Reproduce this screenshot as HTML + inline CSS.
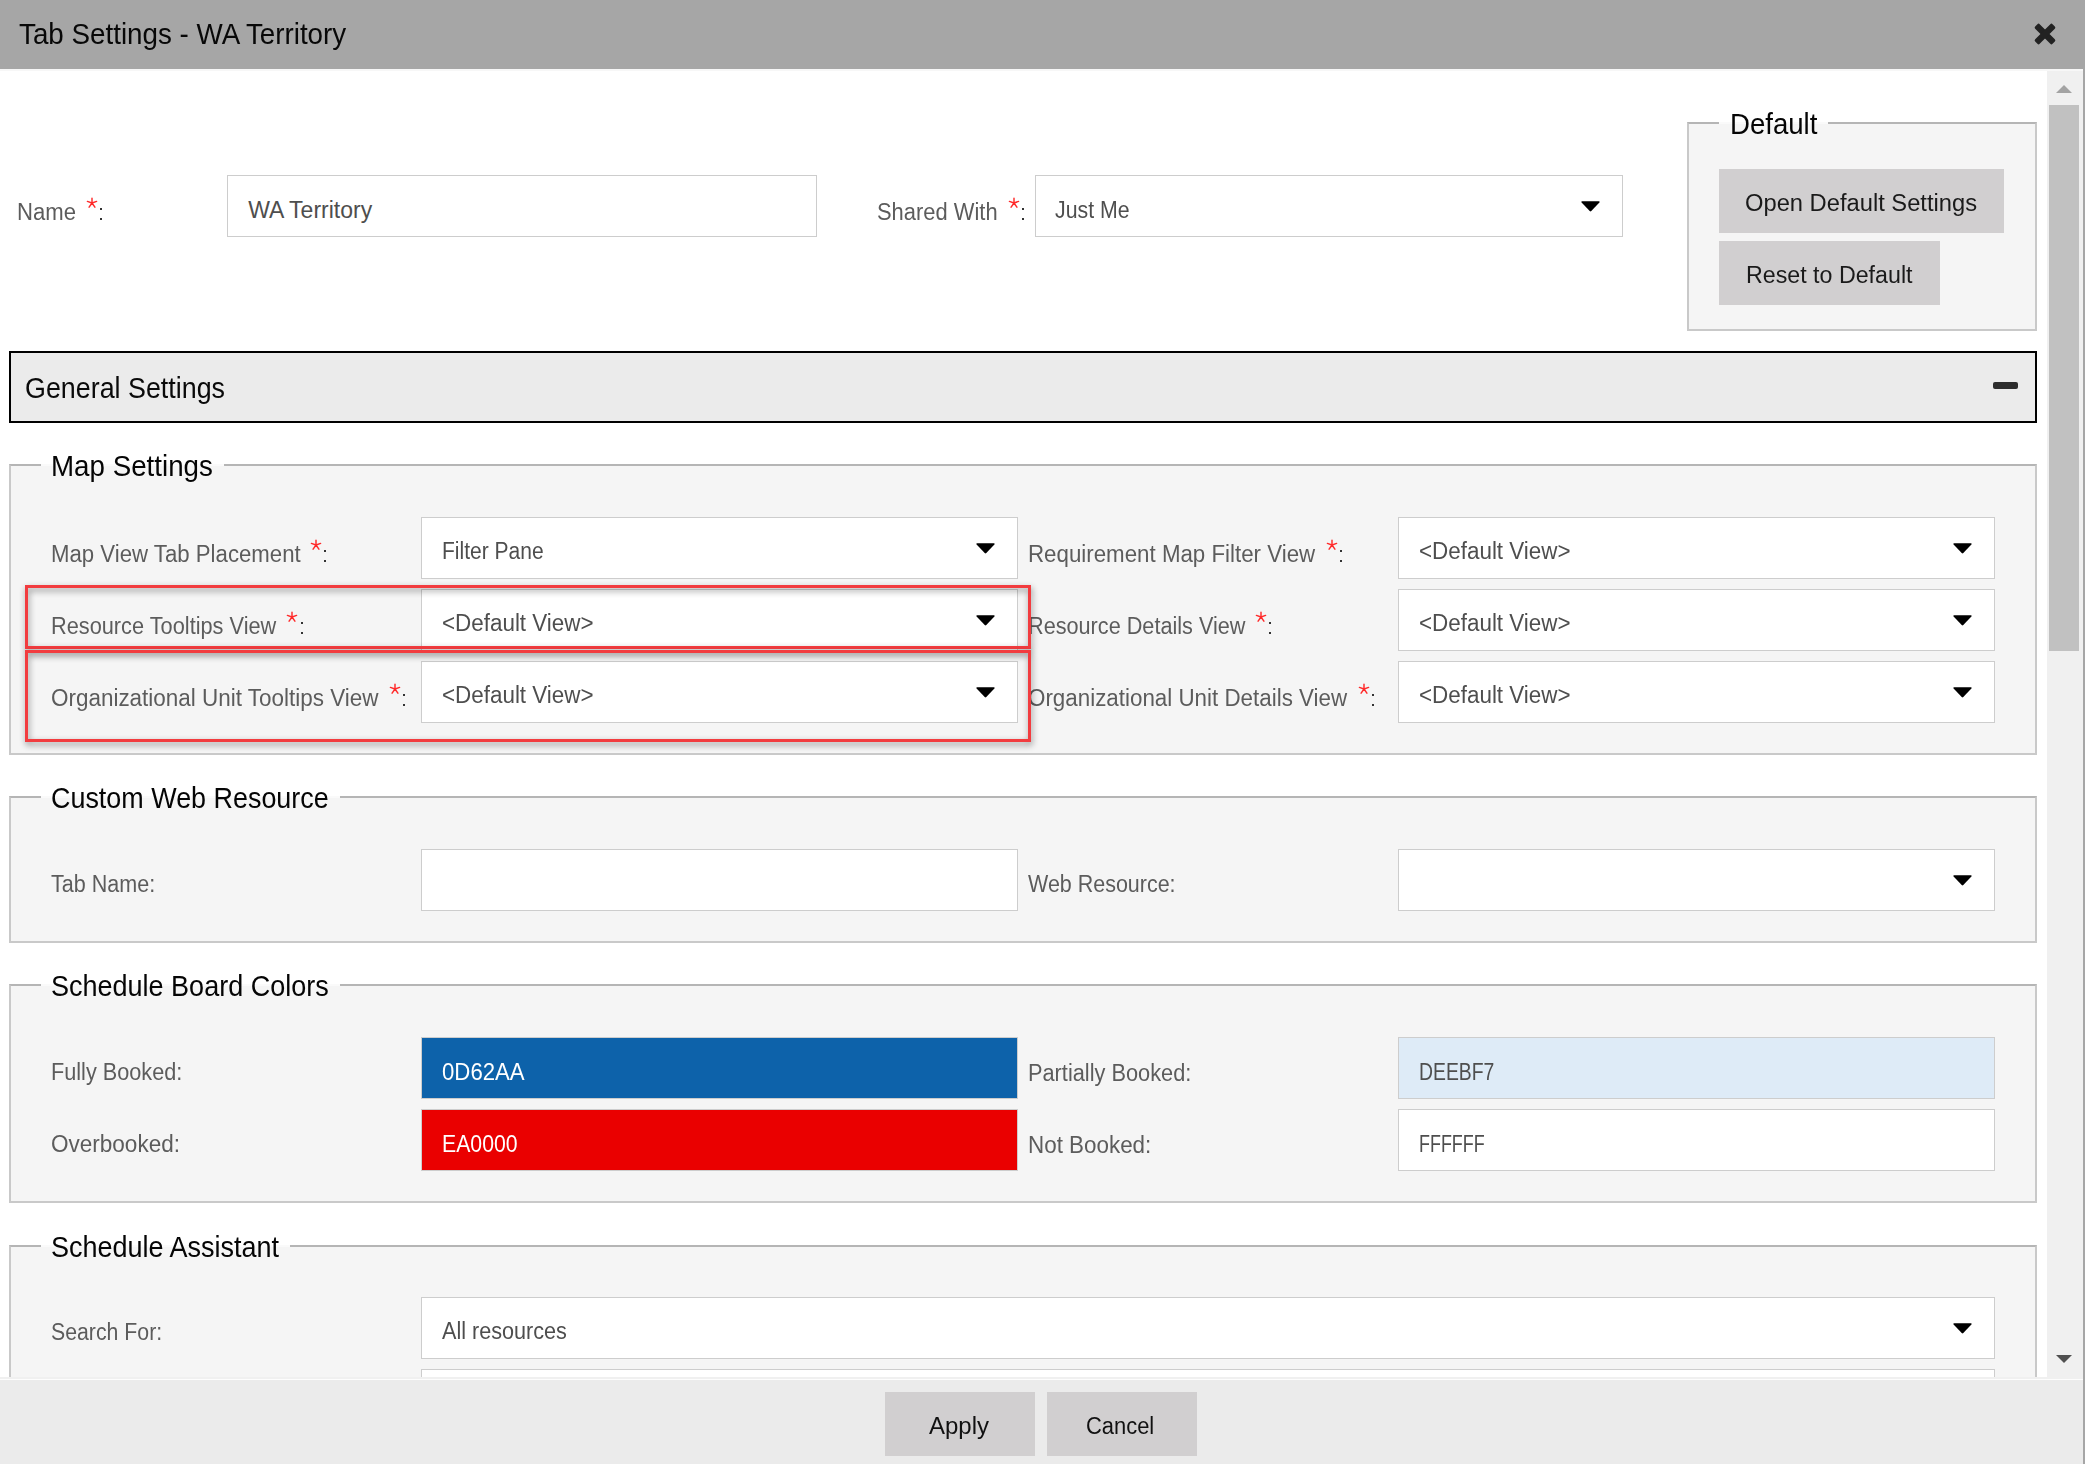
<!DOCTYPE html>
<html><head><meta charset="utf-8"><title>Tab Settings - WA Territory</title>
<style>
html,body{margin:0;padding:0;width:2085px;height:1464px;overflow:hidden;background:#fff;}
body{position:relative;font-family:"Liberation Sans",sans-serif;}
.t{position:absolute;white-space:nowrap;}
.r{position:absolute;}
#content{position:absolute;left:0;top:71px;width:2047px;height:1306px;overflow:hidden;}
#inner{position:absolute;left:0;top:-71px;width:2047px;height:1600px;}
</style></head><body>
<div class="r" style="left:0px;top:0px;width:2085px;height:69px;background:#a6a6a6;"></div>
<div class="t" style="left:19.20px;top:20px;font-size:29px;line-height:29px;color:#080808;transform:scaleX(0.9576);transform-origin:0 0;">Tab Settings - WA Territory</div>
<svg class="r" style="left:2031px;top:19.5px" width="28" height="28" viewBox="-14 -14 28 28"><g fill="#222" transform="rotate(45)"><rect x="-12.3" y="-3.2" width="24.6" height="6.4" rx="1.6"/><rect x="-3.2" y="-12.3" width="6.4" height="24.6" rx="1.6"/></g></svg>
<div class="r" style="left:0px;top:69px;width:2083px;height:2px;background:#f7f7f7;"></div>
<div class="r" style="left:2083px;top:0px;width:2px;height:1464px;background:#a6a6a6;"></div>
<div class="r" style="left:0px;top:71px;width:2047px;height:1306px;background:#ffffff;"></div>
<div class="r" style="left:2047px;top:71px;width:36px;height:1306px;background:#f0f0f0;"></div>
<div class="r" style="left:2049px;top:105px;width:30px;height:546px;background:#c1c1c1;"></div>
<svg class="r" style="left:2055px;top:84px" width="18" height="10" viewBox="0 0 18 10"><path d="M1 9 L9 1 L17 9Z" fill="#a3a3a3"/></svg>
<svg class="r" style="left:2055px;top:1354px" width="18" height="10" viewBox="0 0 18 10"><path d="M1 1 L17 1 L9 9Z" fill="#505050"/></svg>
<div class="r" style="left:0px;top:1377px;width:2083px;height:2px;background:#f0f0f0;"></div>
<div class="r" style="left:0px;top:1379px;width:2083px;height:1px;background:#fdfdfd;"></div>
<div class="r" style="left:0px;top:1380px;width:2083px;height:84px;background:#ebebeb;"></div>
<div class="r" style="left:885px;top:1392px;width:150px;height:64px;background:#d1cfd0;"></div>
<div class="r" style="left:1047px;top:1392px;width:150px;height:64px;background:#d1cfd0;"></div>
<div class="t" style="left:928.70px;top:1415px;font-size:23px;line-height:23px;color:#111;transform:scaleX(1.0431);transform-origin:0 0;">Apply</div>
<div class="t" style="left:1086.20px;top:1415px;font-size:23px;line-height:23px;color:#111;transform:scaleX(0.9528);transform-origin:0 0;">Cancel</div>

<div id="content"><div id="inner">
<div class="t" style="left:16.70px;top:201px;font-size:23px;line-height:23px;color:#5c5c5c;transform:scaleX(0.9623);transform-origin:0 0;">Name</div>
<svg class="r" style="left:85px;top:196.2px" width="14" height="14" viewBox="-7 -7 14 14"><path d="M0 0 L0 -4.8 M0 0 L-4.6 -1.6 M0 0 L4.6 -1.6 M0 0 L-2.9 4.2 M0 0 L2.9 4.2" stroke="#ff2a2a" stroke-width="1.45" stroke-linecap="round" fill="none"/></svg>
<div class="r" style="left:100px;top:208px;width:2px;height:2px;background:#333;"></div>
<div class="r" style="left:100px;top:218px;width:2px;height:2px;background:#333;"></div>
<div class="r" style="left:227px;top:175px;width:590px;height:62px;background:#fff;border:1px solid #cdcdcd;box-sizing:border-box;"></div>
<div class="t" style="left:248.20px;top:198.5px;font-size:23px;line-height:23px;color:#4e4e4e;">WA Territory</div>
<div class="t" style="left:876.70px;top:201px;font-size:23px;line-height:23px;color:#5c5c5c;transform:scaleX(0.9528);transform-origin:0 0;">Shared With</div>
<svg class="r" style="left:1006.75px;top:196.2px" width="14" height="14" viewBox="-7 -7 14 14"><path d="M0 0 L0 -4.8 M0 0 L-4.6 -1.6 M0 0 L4.6 -1.6 M0 0 L-2.9 4.2 M0 0 L2.9 4.2" stroke="#ff2a2a" stroke-width="1.45" stroke-linecap="round" fill="none"/></svg>
<div class="r" style="left:1022px;top:208px;width:2px;height:2px;background:#333;"></div>
<div class="r" style="left:1022px;top:218px;width:2px;height:2px;background:#333;"></div>
<div class="r" style="left:1035px;top:175px;width:588px;height:62px;background:#fff;border:1px solid #cdcdcd;box-sizing:border-box;"></div>
<div class="t" style="left:1055.20px;top:198.5px;font-size:23px;line-height:23px;color:#4e4e4e;transform:scaleX(0.9259);transform-origin:0 0;">Just Me</div>
<svg class="r" style="left:1579.5px;top:199.75px" width="21" height="12.5" viewBox="-1 -1 21 12.5"><path d="M1.2 0.3 L17.8 0.3 Q19.2 0.3 18.4 1.4 L10.3 10.0 Q9.5 10.8 8.7 10.0 L0.6 1.4 Q-0.2 0.3 1.2 0.3Z" fill="#000"/></svg>
<div class="r" style="left:1687px;top:122px;width:350px;height:209px;background:#f5f5f5;border:2px solid #c9c9c9;box-sizing:border-box;border-top-color:#b5b5b5;"></div>
<div class="r" style="left:1719px;top:122px;width:109px;height:2px;background:#fafafa;"></div>
<div class="t" style="left:1730.20px;top:110px;font-size:29px;line-height:29px;color:#050505;transform:scaleX(0.9511);transform-origin:0 0;">Default</div>
<div class="r" style="left:1719px;top:169px;width:285px;height:64px;background:#d1cfd0;"></div>
<div class="t" style="left:1744.80px;top:192px;font-size:23px;line-height:23px;color:#1a1a1a;transform:scaleX(1.0311);transform-origin:0 0;">Open Default Settings</div>
<div class="r" style="left:1719px;top:241px;width:221px;height:64px;background:#d1cfd0;"></div>
<div class="t" style="left:1745.70px;top:264px;font-size:23px;line-height:23px;color:#1a1a1a;transform:scaleX(1.0096);transform-origin:0 0;">Reset to Default</div>
<div class="r" style="left:9px;top:351px;width:2028px;height:72px;background:#ebebeb;border:2px solid #000;box-sizing:border-box;"></div>
<div class="t" style="left:25.20px;top:374px;font-size:29px;line-height:29px;color:#0a0a0a;transform:scaleX(0.9259);transform-origin:0 0;">General Settings</div>
<div class="r" style="left:1993px;top:382px;width:25px;height:7px;background:#2d2d2d;border-radius:2px;"></div>
<div class="r" style="left:9px;top:464px;width:2028px;height:291px;background:#f5f5f5;border:2px solid #c9c9c9;box-sizing:border-box;border-top-color:#b5b5b5;"></div>
<div class="r" style="left:41px;top:464px;width:183px;height:2px;background:#fafafa;"></div>
<div class="t" style="left:51.20px;top:452px;font-size:29px;line-height:29px;color:#050505;transform:scaleX(0.9562);transform-origin:0 0;">Map Settings</div>
<div class="t" style="left:51.20px;top:543px;font-size:23px;line-height:23px;color:#5c5c5c;transform:scaleX(0.9653);transform-origin:0 0;">Map View Tab Placement</div>
<svg class="r" style="left:309.25px;top:538.2px" width="14" height="14" viewBox="-7 -7 14 14"><path d="M0 0 L0 -4.8 M0 0 L-4.6 -1.6 M0 0 L4.6 -1.6 M0 0 L-2.9 4.2 M0 0 L2.9 4.2" stroke="#ff2a2a" stroke-width="1.45" stroke-linecap="round" fill="none"/></svg>
<div class="r" style="left:324px;top:550px;width:2px;height:2px;background:#333;"></div>
<div class="r" style="left:324px;top:560px;width:2px;height:2px;background:#333;"></div>
<div class="t" style="left:51.20px;top:615px;font-size:23px;line-height:23px;color:#5c5c5c;transform:scaleX(0.9456);transform-origin:0 0;">Resource Tooltips View</div>
<svg class="r" style="left:285px;top:610.2px" width="14" height="14" viewBox="-7 -7 14 14"><path d="M0 0 L0 -4.8 M0 0 L-4.6 -1.6 M0 0 L4.6 -1.6 M0 0 L-2.9 4.2 M0 0 L2.9 4.2" stroke="#ff2a2a" stroke-width="1.45" stroke-linecap="round" fill="none"/></svg>
<div class="r" style="left:300.5px;top:622px;width:2.0px;height:2px;background:#333;"></div>
<div class="r" style="left:300.5px;top:632px;width:2.0px;height:2px;background:#333;"></div>
<div class="t" style="left:51.20px;top:687px;font-size:23px;line-height:23px;color:#5c5c5c;transform:scaleX(0.9762);transform-origin:0 0;">Organizational Unit Tooltips View</div>
<svg class="r" style="left:388px;top:682.2px" width="14" height="14" viewBox="-7 -7 14 14"><path d="M0 0 L0 -4.8 M0 0 L-4.6 -1.6 M0 0 L4.6 -1.6 M0 0 L-2.9 4.2 M0 0 L2.9 4.2" stroke="#ff2a2a" stroke-width="1.45" stroke-linecap="round" fill="none"/></svg>
<div class="r" style="left:403px;top:694px;width:2px;height:2px;background:#333;"></div>
<div class="r" style="left:403px;top:704px;width:2px;height:2px;background:#333;"></div>
<div class="r" style="left:421px;top:517px;width:597px;height:62px;background:#fff;border:1px solid #cdcdcd;box-sizing:border-box;"></div>
<div class="t" style="left:442.20px;top:540px;font-size:23px;line-height:23px;color:#4e4e4e;transform:scaleX(0.9144);transform-origin:0 0;">Filter Pane</div>
<svg class="r" style="left:974.5px;top:541.75px" width="21" height="12.5" viewBox="-1 -1 21 12.5"><path d="M1.2 0.3 L17.8 0.3 Q19.2 0.3 18.4 1.4 L10.3 10.0 Q9.5 10.8 8.7 10.0 L0.6 1.4 Q-0.2 0.3 1.2 0.3Z" fill="#000"/></svg>
<div class="r" style="left:421px;top:589px;width:597px;height:62px;background:#fff;border:1px solid #cdcdcd;box-sizing:border-box;"></div>
<div class="t" style="left:442.20px;top:612px;font-size:23px;line-height:23px;color:#4e4e4e;transform:scaleX(0.9744);transform-origin:0 0;">&lt;Default View&gt;</div>
<svg class="r" style="left:974.5px;top:613.75px" width="21" height="12.5" viewBox="-1 -1 21 12.5"><path d="M1.2 0.3 L17.8 0.3 Q19.2 0.3 18.4 1.4 L10.3 10.0 Q9.5 10.8 8.7 10.0 L0.6 1.4 Q-0.2 0.3 1.2 0.3Z" fill="#000"/></svg>
<div class="r" style="left:421px;top:661px;width:597px;height:62px;background:#fff;border:1px solid #cdcdcd;box-sizing:border-box;"></div>
<div class="t" style="left:442.20px;top:684px;font-size:23px;line-height:23px;color:#4e4e4e;transform:scaleX(0.9744);transform-origin:0 0;">&lt;Default View&gt;</div>
<svg class="r" style="left:974.5px;top:685.75px" width="21" height="12.5" viewBox="-1 -1 21 12.5"><path d="M1.2 0.3 L17.8 0.3 Q19.2 0.3 18.4 1.4 L10.3 10.0 Q9.5 10.8 8.7 10.0 L0.6 1.4 Q-0.2 0.3 1.2 0.3Z" fill="#000"/></svg>
<div class="t" style="left:1027.95px;top:543px;font-size:23px;line-height:23px;color:#5c5c5c;transform:scaleX(0.9697);transform-origin:0 0;">Requirement Map Filter View</div>
<svg class="r" style="left:1324.5px;top:538.2px" width="14" height="14" viewBox="-7 -7 14 14"><path d="M0 0 L0 -4.8 M0 0 L-4.6 -1.6 M0 0 L4.6 -1.6 M0 0 L-2.9 4.2 M0 0 L2.9 4.2" stroke="#ff2a2a" stroke-width="1.45" stroke-linecap="round" fill="none"/></svg>
<div class="r" style="left:1339.5px;top:550px;width:2.0px;height:2px;background:#333;"></div>
<div class="r" style="left:1339.5px;top:560px;width:2.0px;height:2px;background:#333;"></div>
<div class="t" style="left:1027.95px;top:615px;font-size:23px;line-height:23px;color:#5c5c5c;transform:scaleX(0.9416);transform-origin:0 0;">Resource Details View</div>
<svg class="r" style="left:1254.25px;top:610.2px" width="14" height="14" viewBox="-7 -7 14 14"><path d="M0 0 L0 -4.8 M0 0 L-4.6 -1.6 M0 0 L4.6 -1.6 M0 0 L-2.9 4.2 M0 0 L2.9 4.2" stroke="#ff2a2a" stroke-width="1.45" stroke-linecap="round" fill="none"/></svg>
<div class="r" style="left:1269px;top:622px;width:2px;height:2px;background:#333;"></div>
<div class="r" style="left:1269px;top:632px;width:2px;height:2px;background:#333;"></div>
<div class="t" style="left:1027.95px;top:687px;font-size:23px;line-height:23px;color:#5c5c5c;transform:scaleX(0.9726);transform-origin:0 0;">Organizational Unit Details View</div>
<svg class="r" style="left:1356.75px;top:682.2px" width="14" height="14" viewBox="-7 -7 14 14"><path d="M0 0 L0 -4.8 M0 0 L-4.6 -1.6 M0 0 L4.6 -1.6 M0 0 L-2.9 4.2 M0 0 L2.9 4.2" stroke="#ff2a2a" stroke-width="1.45" stroke-linecap="round" fill="none"/></svg>
<div class="r" style="left:1371.5px;top:694px;width:2.0px;height:2px;background:#333;"></div>
<div class="r" style="left:1371.5px;top:704px;width:2.0px;height:2px;background:#333;"></div>
<div class="r" style="left:1398px;top:517px;width:597px;height:62px;background:#fff;border:1px solid #cdcdcd;box-sizing:border-box;"></div>
<div class="t" style="left:1419.20px;top:540px;font-size:23px;line-height:23px;color:#4e4e4e;transform:scaleX(0.9744);transform-origin:0 0;">&lt;Default View&gt;</div>
<svg class="r" style="left:1951.5px;top:541.75px" width="21" height="12.5" viewBox="-1 -1 21 12.5"><path d="M1.2 0.3 L17.8 0.3 Q19.2 0.3 18.4 1.4 L10.3 10.0 Q9.5 10.8 8.7 10.0 L0.6 1.4 Q-0.2 0.3 1.2 0.3Z" fill="#000"/></svg>
<div class="r" style="left:1398px;top:589px;width:597px;height:62px;background:#fff;border:1px solid #cdcdcd;box-sizing:border-box;"></div>
<div class="t" style="left:1419.20px;top:612px;font-size:23px;line-height:23px;color:#4e4e4e;transform:scaleX(0.9744);transform-origin:0 0;">&lt;Default View&gt;</div>
<svg class="r" style="left:1951.5px;top:613.75px" width="21" height="12.5" viewBox="-1 -1 21 12.5"><path d="M1.2 0.3 L17.8 0.3 Q19.2 0.3 18.4 1.4 L10.3 10.0 Q9.5 10.8 8.7 10.0 L0.6 1.4 Q-0.2 0.3 1.2 0.3Z" fill="#000"/></svg>
<div class="r" style="left:1398px;top:661px;width:597px;height:62px;background:#fff;border:1px solid #cdcdcd;box-sizing:border-box;"></div>
<div class="t" style="left:1419.20px;top:684px;font-size:23px;line-height:23px;color:#4e4e4e;transform:scaleX(0.9744);transform-origin:0 0;">&lt;Default View&gt;</div>
<svg class="r" style="left:1951.5px;top:685.75px" width="21" height="12.5" viewBox="-1 -1 21 12.5"><path d="M1.2 0.3 L17.8 0.3 Q19.2 0.3 18.4 1.4 L10.3 10.0 Q9.5 10.8 8.7 10.0 L0.6 1.4 Q-0.2 0.3 1.2 0.3Z" fill="#000"/></svg>
<div class="r" style="left:25px;top:585px;width:1006px;height:64px;border:3px solid #f23c3f;box-sizing:border-box;filter:drop-shadow(1px 3px 3px rgba(0,0,0,0.45));"></div>
<div class="r" style="left:25px;top:650px;width:1006px;height:92px;border:3px solid #f23c3f;box-sizing:border-box;filter:drop-shadow(1px 3px 3px rgba(0,0,0,0.45));"></div>
<div class="r" style="left:9px;top:796px;width:2028px;height:147px;background:#f5f5f5;border:2px solid #c9c9c9;box-sizing:border-box;border-top-color:#b5b5b5;"></div>
<div class="r" style="left:41px;top:796px;width:299px;height:2px;background:#fafafa;"></div>
<div class="t" style="left:51.20px;top:784px;font-size:29px;line-height:29px;color:#050505;transform:scaleX(0.9281);transform-origin:0 0;">Custom Web Resource</div>
<div class="t" style="left:51.20px;top:873px;font-size:23px;line-height:23px;color:#5c5c5c;transform:scaleX(0.9369);transform-origin:0 0;">Tab Name:</div>
<div class="r" style="left:421px;top:849px;width:597px;height:62px;background:#fff;border:1px solid #cdcdcd;box-sizing:border-box;"></div>
<div class="t" style="left:1027.95px;top:873px;font-size:23px;line-height:23px;color:#5c5c5c;transform:scaleX(0.9335);transform-origin:0 0;">Web Resource:</div>
<div class="r" style="left:1398px;top:849px;width:597px;height:62px;background:#fff;border:1px solid #cdcdcd;box-sizing:border-box;"></div>
<svg class="r" style="left:1951.5px;top:873.75px" width="21" height="12.5" viewBox="-1 -1 21 12.5"><path d="M1.2 0.3 L17.8 0.3 Q19.2 0.3 18.4 1.4 L10.3 10.0 Q9.5 10.8 8.7 10.0 L0.6 1.4 Q-0.2 0.3 1.2 0.3Z" fill="#000"/></svg>
<div class="r" style="left:9px;top:984px;width:2028px;height:219px;background:#f5f5f5;border:2px solid #c9c9c9;box-sizing:border-box;border-top-color:#b5b5b5;"></div>
<div class="r" style="left:41px;top:984px;width:299px;height:2px;background:#fafafa;"></div>
<div class="t" style="left:51.20px;top:972px;font-size:29px;line-height:29px;color:#050505;transform:scaleX(0.9312);transform-origin:0 0;">Schedule Board Colors</div>
<div class="t" style="left:51.20px;top:1061px;font-size:23px;line-height:23px;color:#5c5c5c;transform:scaleX(0.9424);transform-origin:0 0;">Fully Booked:</div>
<div class="t" style="left:51.20px;top:1133px;font-size:23px;line-height:23px;color:#5c5c5c;transform:scaleX(0.9792);transform-origin:0 0;">Overbooked:</div>
<div class="r" style="left:421px;top:1037px;width:597px;height:62px;background:#0d62aa;border:1px solid #cdcdcd;box-sizing:border-box;"></div>
<div class="r" style="left:421px;top:1109px;width:597px;height:62px;background:#ea0000;border:1px solid #cdcdcd;box-sizing:border-box;"></div>
<div class="t" style="left:441.70px;top:1060.5px;font-size:23px;line-height:23px;color:#ffffff;transform:scaleX(0.9651);transform-origin:0 0;">0D62AA</div>
<div class="t" style="left:441.70px;top:1132.5px;font-size:23px;line-height:23px;color:#ffffff;transform:scaleX(0.9232);transform-origin:0 0;">EA0000</div>
<div class="t" style="left:1027.95px;top:1061.5px;font-size:23px;line-height:23px;color:#5c5c5c;transform:scaleX(0.9462);transform-origin:0 0;">Partially Booked:</div>
<div class="t" style="left:1027.95px;top:1133.5px;font-size:23px;line-height:23px;color:#5c5c5c;transform:scaleX(0.9740);transform-origin:0 0;">Not Booked:</div>
<div class="r" style="left:1398px;top:1037px;width:597px;height:62px;background:#deebf7;border:1px solid #cdcdcd;box-sizing:border-box;"></div>
<div class="r" style="left:1398px;top:1109px;width:597px;height:62px;background:#ffffff;border:1px solid #cdcdcd;box-sizing:border-box;"></div>
<div class="t" style="left:1419.20px;top:1060.5px;font-size:23px;line-height:23px;color:#4e4e4e;transform:scaleX(0.8427);transform-origin:0 0;">DEEBF7</div>
<div class="t" style="left:1419.20px;top:1132.5px;font-size:23px;line-height:23px;color:#4e4e4e;transform:scaleX(0.7798);transform-origin:0 0;">FFFFFF</div>
<div class="r" style="left:9px;top:1245px;width:2028px;height:255px;background:#f5f5f5;border:2px solid #c9c9c9;box-sizing:border-box;border-top-color:#b5b5b5;border-bottom:none;"></div>
<div class="r" style="left:41px;top:1245px;width:249px;height:2px;background:#fafafa;"></div>
<div class="t" style="left:51.20px;top:1233px;font-size:29px;line-height:29px;color:#050505;transform:scaleX(0.9306);transform-origin:0 0;">Schedule Assistant</div>
<div class="t" style="left:51.20px;top:1321px;font-size:23px;line-height:23px;color:#5c5c5c;transform:scaleX(0.9250);transform-origin:0 0;">Search For:</div>
<div class="r" style="left:421px;top:1297px;width:1574px;height:62px;background:#fff;border:1px solid #cdcdcd;box-sizing:border-box;"></div>
<div class="t" style="left:442.20px;top:1320px;font-size:23px;line-height:23px;color:#4e4e4e;transform:scaleX(0.9398);transform-origin:0 0;">All resources</div>
<svg class="r" style="left:1951.5px;top:1321.75px" width="21" height="12.5" viewBox="-1 -1 21 12.5"><path d="M1.2 0.3 L17.8 0.3 Q19.2 0.3 18.4 1.4 L10.3 10.0 Q9.5 10.8 8.7 10.0 L0.6 1.4 Q-0.2 0.3 1.2 0.3Z" fill="#000"/></svg>
<div class="r" style="left:421px;top:1369px;width:1574px;height:62px;background:#fff;border:1px solid #cdcdcd;box-sizing:border-box;"></div>

</div></div>
</body></html>
